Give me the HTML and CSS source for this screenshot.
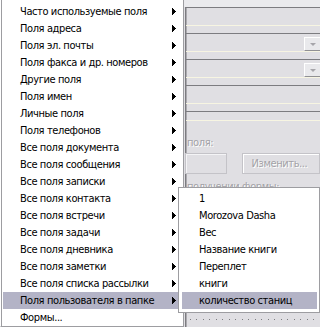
FILE: index.html
```html
<!DOCTYPE html>
<html lang="ru">
  <head>
    <meta charset="utf-8">
    <link rel="stylesheet" href="styles.css">
    <title>Поля</title>
  </head>
  <body>
    <div class="dialog">
      <div class="top-band"></div>
      <div class="pane">
        <div class="field"></div>
        <div class="field"><span class="drop"></span></div>
        <div class="field"><span class="drop"></span></div>
        <div class="field"></div>
        <div class="field short"></div>
        <div class="label">поля:</div>
        <div class="edit-row">
          <div class="textbox"></div>
          <div class="button">Изменить...</div>
        </div>
        <div class="label second">получении формы:</div>
        <div class="dots"></div>
      </div>
    </div>

    <!-- main context menu -->
    <ul class="menu main-menu">
      <li class="sub">Часто используемые поля</li>
      <li class="sub">Поля адреса</li>
      <li class="sub">Поля эл. почты</li>
      <li class="sub">Поля факса и др. номеров</li>
      <li class="sub">Другие поля</li>
      <li class="sub">Поля имен</li>
      <li class="sub">Личные поля</li>
      <li class="sub">Поля телефонов</li>
      <li class="sub">Все поля документа</li>
      <li class="sub">Все поля сообщения</li>
      <li class="sub">Все поля записки</li>
      <li class="sub">Все поля контакта</li>
      <li class="sub">Все поля встречи</li>
      <li class="sub">Все поля задачи</li>
      <li class="sub">Все поля дневника</li>
      <li class="sub">Все поля заметки</li>
      <li class="sub">Все поля списка рассылки</li>
      <li class="sub active">Поля пользователя в папке</li>
      <li>Формы...</li>
    </ul>

    <!-- submenu of the active item -->
    <ul class="menu sub-menu">
      <li>1</li>
      <li>Morozova Dasha</li>
      <li>Вес</li>
      <li>Название книги</li>
      <li>Переплет</li>
      <li>книги</li>
      <li class="active">количество станиц</li>
    </ul>
  </body>
</html>
```

FILE: styles.css
```css
html, body {
  margin: 0;
  height: 100%;
  overflow: hidden;
}

body {
  position: relative;
  background: #e0dfe3;
  font-family: "DejaVu Sans Condensed", "DejaVu Sans", sans-serif;
  font-size: 11px;
  letter-spacing: -0.4px;
  color: #000;
}

/* dialog behind the menus */
.top-band {
  height: 7px;
  background: #eaeaed;
}

.pane {
  margin-left: 185px;
  height: 320px;
  border-left: 1px solid #7c7c80;
  box-shadow: inset 1px 0 #acabb0;
  display: flex;
  flex-direction: column;
}

.field {
  height: 17px;
  margin-bottom: 7px;
  border-top: 1px solid #7c7c80;
  border-bottom: 1px solid #f7f5e2;
  display: flex;
  justify-content: flex-end;
  align-items: flex-end;
}

.field.short {
  height: 8px;
  margin-bottom: 0;
}

.drop {
  width: 15px;
  height: 12px;
  background: #e9e9ec;
  border-top: 1px solid #fff;
  border-left: 1px solid #fff;
  border-bottom: 1px solid #909094;
  display: flex;
  justify-content: center;
  align-items: center;
}

.drop::after {
  content: "";
  border-top: 3px solid #a6a5aa;
  border-left: 3px solid transparent;
  border-right: 3px solid transparent;
}

.label {
  margin-top: 15px;
  padding-left: 1px;
  line-height: 13px;
  color: #a3a2a7;
  text-shadow: 1px 1px #fff;
}

.label.second {
  margin-top: 6px;
}

.edit-row {
  margin-top: 4px;
  display: flex;
  gap: 15px;
}

.textbox {
  width: 47px;
  height: 19px;
  margin-left: -1px;
  border: 1px solid #c4c3c8;
  box-shadow: inset 1px 1px #f4f4f6;
}

.button {
  width: 80px;
  height: 19px;
  padding-left: 9px;
  border: 1px solid #c4c3c8;
  box-shadow: inset 1px 1px #fff;
  line-height: 19px;
  color: #a3a2a7;
  text-shadow: 1px 1px #fff;
}

.dots {
  height: 1px;
  margin: auto 0 7px 4px;
  background: repeating-linear-gradient(to right, #7c7c80 0 1px, transparent 1px 6.5px);
}

/* menus */
.menu {
  position: absolute;
  margin: 0;
  list-style: none;
  background: #fff;
  border: 1px solid #9d9da1;
  box-sizing: border-box;
}

.main-menu {
  left: 0;
  top: -1px;
  width: 184px;
  padding: 3px 1px 0 2px;
  border-left-color: #fff;
  box-shadow: inset 1px 0 #9d9da1;
}

.sub-menu {
  left: 178px;
  top: 187px;
  width: 142px;
  padding: 2px 2px 3px 3px;
}

.menu li {
  position: relative;
  height: 17px;
  line-height: 17px;
  padding-left: 17px;
  white-space: nowrap;
}

.menu li.active {
  background: #b3b3c6;
}

.menu li.sub::after {
  content: "";
  position: absolute;
  right: 6px;
  top: 5px;
  width: 4px;
  height: 7px;
  background: #000;
  clip-path: polygon(0 0, 1px 0, 1px 1px, 2px 1px, 2px 2px, 3px 2px, 3px 3px, 4px 3px, 4px 4px, 3px 4px, 3px 5px, 2px 5px, 2px 6px, 1px 6px, 1px 7px, 0 7px);
}
```
